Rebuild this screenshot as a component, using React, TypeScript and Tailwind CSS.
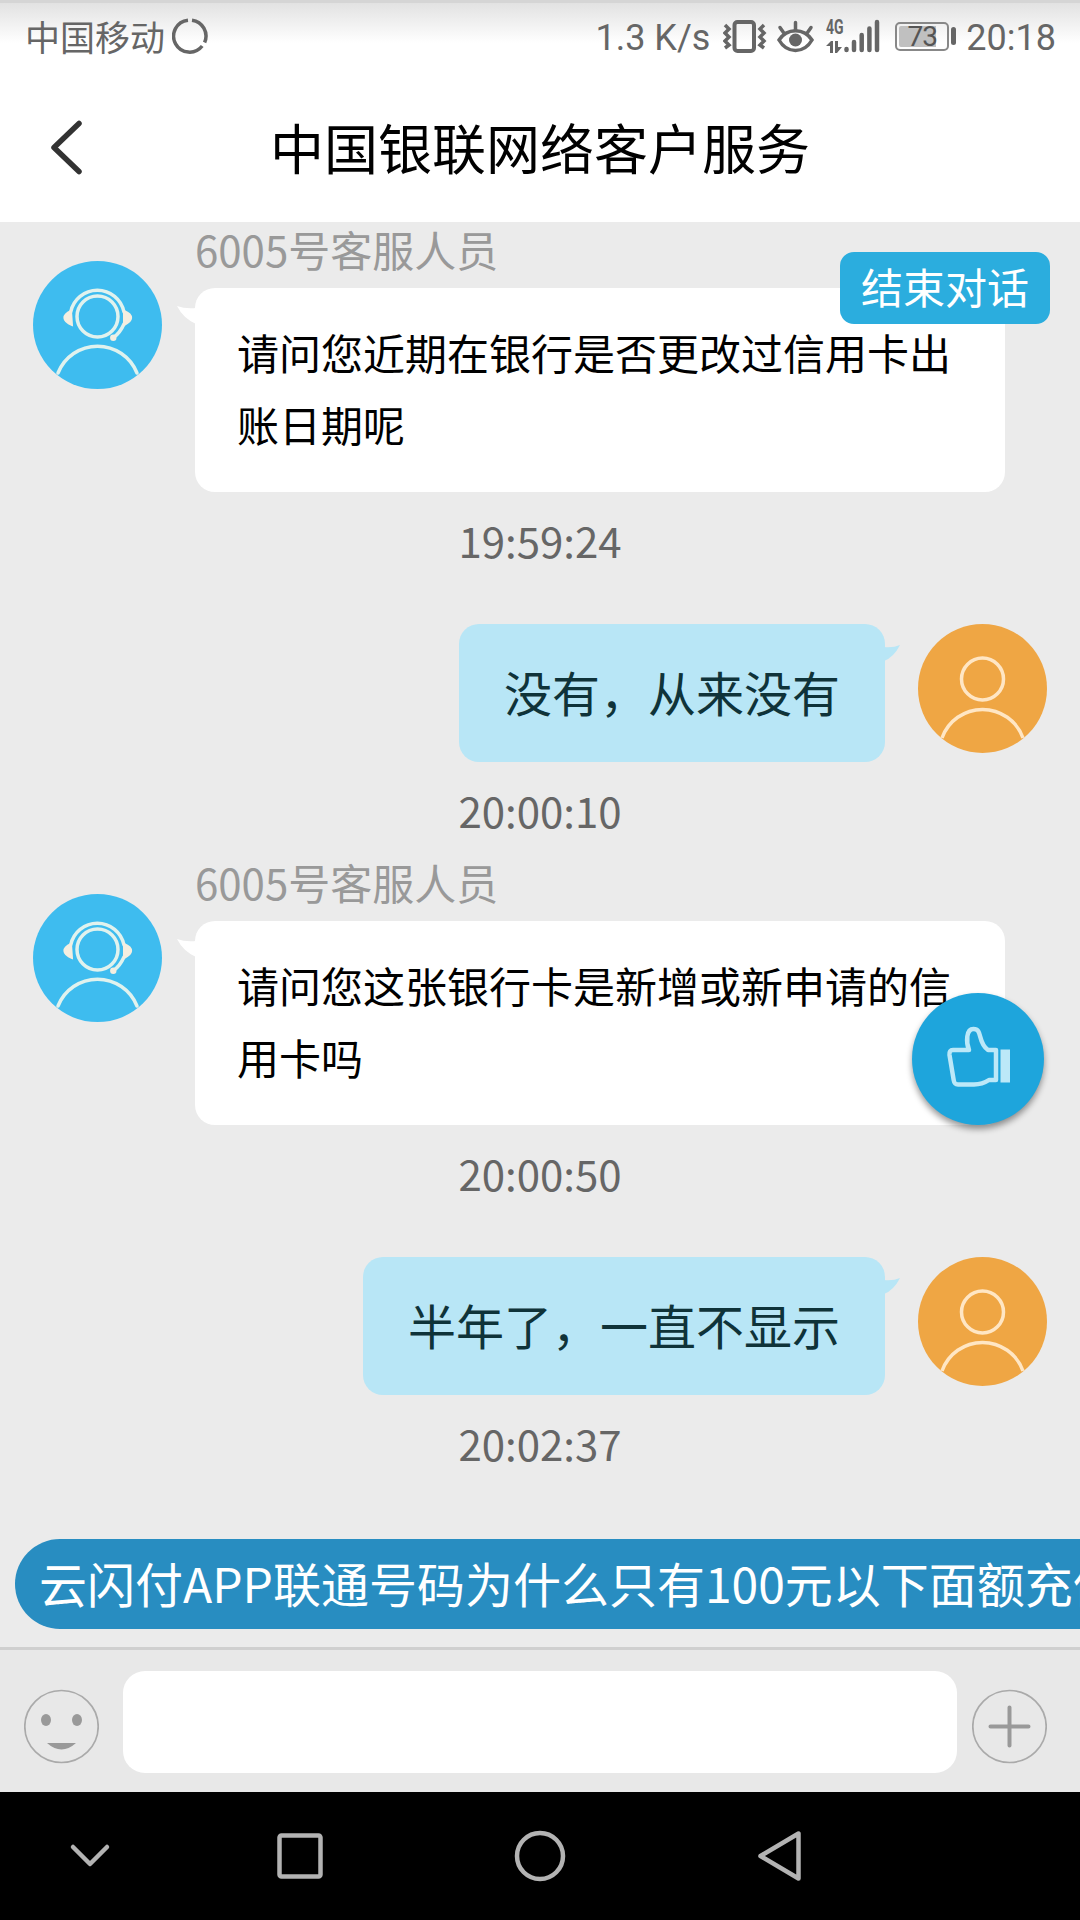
import type { ReactNode } from 'react';

type Message = {
  from: 'agent' | 'user';
  name?: string;
  text: string;
  time: string;
};

const messages: Message[] = [
  { from: 'agent', name: '6005号客服人员', text: '请问您近期在银行是否更改过信用卡出账日期呢', time: '19:59:24' },
  { from: 'user', text: '没有，从来没有', time: '20:00:10' },
  { from: 'agent', name: '6005号客服人员', text: '请问您这张银行卡是新增或新申请的信用卡吗', time: '20:00:50' },
  { from: 'user', text: '半年了，一直不显示', time: '20:02:37' },
];

function StatusBar() {
  return (
    <div className="flex h-[75px] shrink-0 items-start justify-between border-t-[3px] border-[#d5d5d5] bg-linear-to-b from-[#e2e2e2] to-white to-[40px] pr-[24px] pl-[25px] text-[#666]">
      <div className="flex h-[66px] items-center">
        <span className="text-[35px] leading-[66px]">中国移动</span>
        <svg className="ml-[7px]" width="36" height="36" viewBox="0 0 36 36" fill="none" stroke="#666" strokeWidth="3.500">
          <path d="M20 2.200A16 16 0 0 1 32.600 24.500" />
          <path d="M30.200 28A16 16 0 1 1 16 2.200" />
        </svg>
      </div>
      <div className="flex h-[66px] items-center font-[Roboto,sans-serif] text-[36px]">
        <span className="pt-1 leading-[62px]">1.3 K/s</span>
        <svg className="ml-[13px]" width="44" height="36" viewBox="0 0 44 36" fill="none" stroke="#666">
          <rect x="11.500" y="4" width="19.500" height="29" rx="3" strokeWidth="4" />
          <path d="M2 7l4 4-4 4 4 4-4 4 4 4-4 3M41 7l-4 4 4 4-4 4 4 4-4 4 4 3" strokeWidth="3.500" />
        </svg>
        <svg className="ml-[10px]" width="38" height="36" viewBox="0 0 38 36" fill="none" stroke="#666" strokeWidth="3.500">
          <path d="M2 22C10 9.500 27 9.500 35 22C27 36 10 36 2 22Z" />
          <circle cx="18.500" cy="22" r="6.500" fill="#666" stroke="none" />
          <path d="M18.500 12V4.500M6.500 14.500L3 9.500M30.500 14.500L34 9.500" strokeLinecap="round" />
        </svg>
        <div className="ml-[11px] flex h-[36px] w-[54px]">
          <div className="flex h-full w-[18px] flex-col">
            <span className="w-[26px] origin-left scale-x-70 text-[20px] leading-[18px] font-bold">4G</span>
            <svg width="18" height="14" viewBox="0 0 18 14" className="mt-[4px]" fill="#666">
              <path d="M0 6L5 1h2v12H4V6ZM9 1h3v6h4l-5 6H9Z" />
            </svg>
          </div>
          <svg width="36" height="36" viewBox="0 0 36 36" stroke="#666" strokeWidth="4.500" strokeLinecap="round">
            <path d="M2.500 32V31M10 32V24M17.700 32V17M25.400 32V10.500M33 32V4" />
          </svg>
        </div>
        <div className="ml-[15px] flex h-[29px] w-[54px] rounded-[5px] border-2 border-[#888] p-[2px]">
          <div className="w-[37px] rounded-l-[2px] bg-[#c0c0c0]">
            <span className="block w-[46px] text-center text-[28px] leading-[22px] tracking-[-1px] text-[#555]">73</span>
          </div>
        </div>
        <div className="ml-[2px] h-[18px] w-[5px] rounded-full bg-[#666]" />
        <span className="ml-[10px] pt-1 leading-[62px]">20:18</span>
      </div>
    </div>
  );
}

function AgentAvatar() {
  return (
    <svg className="shrink-0" width="129" height="129" viewBox="0 0 129 129" fill="none">
      <ellipse cx="64.500" cy="64" rx="64.500" ry="64" fill="#3ebcef" />
      <g stroke="#e0f2ee" strokeWidth="3.500" strokeLinecap="round">
        <circle cx="64.500" cy="55.500" r="20.500" />
        <path d="M37.700 51A27.200 27.200 0 0 1 91 51M91 63Q87 72 80.500 76.500" />
        <path d="M25 112A42.500 42.500 0 0 1 104 112" />
      </g>
      <path d="M38 50C29 54 29 60 39 64Z" fill="#f4eee0" stroke="#f4eee0" strokeWidth="2" />
      <path d="M91 50C101 54 100 60 91 64Z" fill="#f4eee0" stroke="#f4eee0" strokeWidth="2" />
      <circle cx="80.300" cy="76.700" r="3.200" fill="#f4eee0" />
    </svg>
  );
}

function UserAvatar() {
  return (
    <svg className="shrink-0" width="129" height="129" viewBox="0 0 129 129" fill="none">
      <circle cx="64.500" cy="64.500" r="64.500" fill="#efa644" />
      <g stroke="#ffe6c4" strokeWidth="3.500">
        <circle cx="64.500" cy="55" r="21" />
        <path d="M24 114A43 43 0 0 1 105 114" />
      </g>
    </svg>
  );
}

function AgentMessage({ name, text }: { name?: string; text: string }) {
  return (
    <div className="flex h-[270px] pl-[33px]">
      <div className="pt-[39px]">
        <AgentAvatar />
      </div>
      <div className="ml-[33px] w-[810px]">
        <div className="h-[66px] text-[42px] leading-[54px] text-[#999]">{name}</div>
        <div className="relative rounded-[20px] bg-white px-[42px] pt-[28px] pb-[32px] text-[42px] leading-[72px] break-all text-black">
          <svg className="absolute top-[18px] left-[-18px]" width="19" height="18" viewBox="0 0 19 18" fill="#fff">
            <path d="M0 0Q8 3 19 2V18Q6 12 0 0Z" />
          </svg>
          {text}
        </div>
      </div>
    </div>
  );
}

function UserMessage({ text }: { text: string }) {
  return (
    <div className="flex h-[138px] justify-end pr-[33px]">
      <div className="relative mr-[33px] rounded-[20px] bg-[#b8e6f6] px-[45px] text-[48px] leading-[134px] text-[#0f3339]">
        {text}
        <svg className="absolute top-[21px] right-[-15px]" width="16" height="16" viewBox="0 0 16 16" fill="#b8e6f6">
          <path d="M16 0Q9 3 0 2V16Q10 12 16 0Z" />
        </svg>
      </div>
      <UserAvatar />
    </div>
  );
}

function NavIcon({ children }: { children: ReactNode }) {
  return (
    <svg width="60" height="60" viewBox="0 0 60 60" fill="none" stroke="#b3b3b3" strokeWidth="4.500" strokeLinecap="round" strokeLinejoin="round">
      {children}
    </svg>
  );
}

export default function App() {
  return (
    <div className="relative flex h-[1920px] w-[1080px] flex-col overflow-hidden bg-[#ebebeb] font-['Noto_Sans_CJK_SC',sans-serif]">
      <StatusBar />

      <header className="grid h-[147px] shrink-0 grid-cols-[270px_540px_270px] items-center bg-white">
        <svg className="ml-[48px]" width="38" height="60" viewBox="0 0 38 60" fill="none" stroke="#333" strokeWidth="5.500" strokeLinecap="round" strokeLinejoin="round">
          <path d="M31 4.500L6 28.500L31 52.500" />
        </svg>
        <h1 className="h-[147px] text-center text-[54px] leading-[144px] whitespace-nowrap text-black">中国银联网络客户服务</h1>
      </header>

      <main className="flex h-[1317px] shrink-0 flex-col">
        {messages.map((m) =>
          m.from === 'agent' ? (
            <div key={m.time}>
              <AgentMessage name={m.name} text={m.text} />
              <div className="h-[132px] text-center text-[42px] leading-[96px] text-[#666]">{m.time}</div>
            </div>
          ) : (
            <div key={m.time}>
              <UserMessage text={m.text} />
              <div className="h-[93px] text-center text-[42px] leading-[96px] text-[#666]">{m.time}</div>
            </div>
          ),
        )}
      </main>

      {/* suggested question, runs past the right edge */}
      <div className="flex h-[108px] shrink-0 overflow-hidden pl-[15px]">
        <div className="h-[90px] shrink-0 rounded-full bg-[#288dc1] px-[24px] text-[48px] leading-[86px] whitespace-nowrap text-white">
          云闪付APP联通号码为什么只有100元以下面额充值
        </div>
      </div>

      <footer className="flex h-[145px] shrink-0 items-start border-t-[3px] border-[#cfcfcf] bg-[#e8e8e8] pt-[21px] pl-[24px]">
        <svg className="mt-[18px]" width="75" height="75" viewBox="0 0 75 75" fill="#999">
          <ellipse cx="37.500" cy="37.500" rx="36.700" ry="36" fill="none" stroke="#aaa" strokeWidth="1.700" />
          <ellipse cx="22" cy="31" rx="5" ry="6" />
          <ellipse cx="53" cy="31" rx="5" ry="6" />
          <path d="M23 54H52Q37.500 67 23 54Z" />
        </svg>
        <input className="ml-[24px] h-[102px] w-[834px] rounded-[22px] bg-white px-6 text-[42px] outline-none" />
        <svg className="mt-[18px] ml-[15px]" width="75" height="75" viewBox="0 0 75 75" fill="none">
          <ellipse cx="37.500" cy="37.500" rx="36.700" ry="36" stroke="#aaa" strokeWidth="1.700" />
          <path d="M37.500 18.500V56.500M18.500 37.500H56.500" stroke="#999" strokeWidth="4" strokeLinecap="round" />
        </svg>
      </footer>

      <nav className="grid h-[128px] shrink-0 grid-cols-[180px_240px_240px_240px] items-center justify-start justify-items-center bg-black">
        <NavIcon>
          <path d="M13 21L30 38L47 21" />
        </NavIcon>
        <NavIcon>
          <rect x="9.500" y="9.500" width="41" height="41" rx="2" />
        </NavIcon>
        <NavIcon>
          <circle cx="30" cy="30" r="23" />
        </NavIcon>
        <NavIcon>
          <path d="M10.500 30L48.500 7.500V52.500Z" />
        </NavIcon>
      </nav>

      <button className="absolute top-[252px] left-[840px] h-[72px] w-[210px] rounded-[14px] bg-[#2badde] pb-[4px] text-[42px] leading-[68px] text-white">
        结束对话
      </button>

      <button className="absolute top-[993px] left-[912px] flex h-[132px] w-[132px] items-center justify-center rounded-full bg-[#1ea5dc] shadow-[0_4px_6px_rgba(0,0,0,0.4)]">
        <svg width="132" height="132" viewBox="0 0 132 132" fill="none" stroke="#bce8f8" strokeWidth="4.500" strokeLinejoin="round">
          <path d="M41 57H57C54 49 54 36 61.500 36C71 36 65 49 76 57H84V87H77C71 91 67 91.500 62 91.500H46C42 91.500 42 89 41.500 86L37.500 62Q37 57 41 57Z" />
          <rect x="88.500" y="56.500" width="9.500" height="33" fill="#bce8f8" stroke="none" />
        </svg>
      </button>
    </div>
  );
}
